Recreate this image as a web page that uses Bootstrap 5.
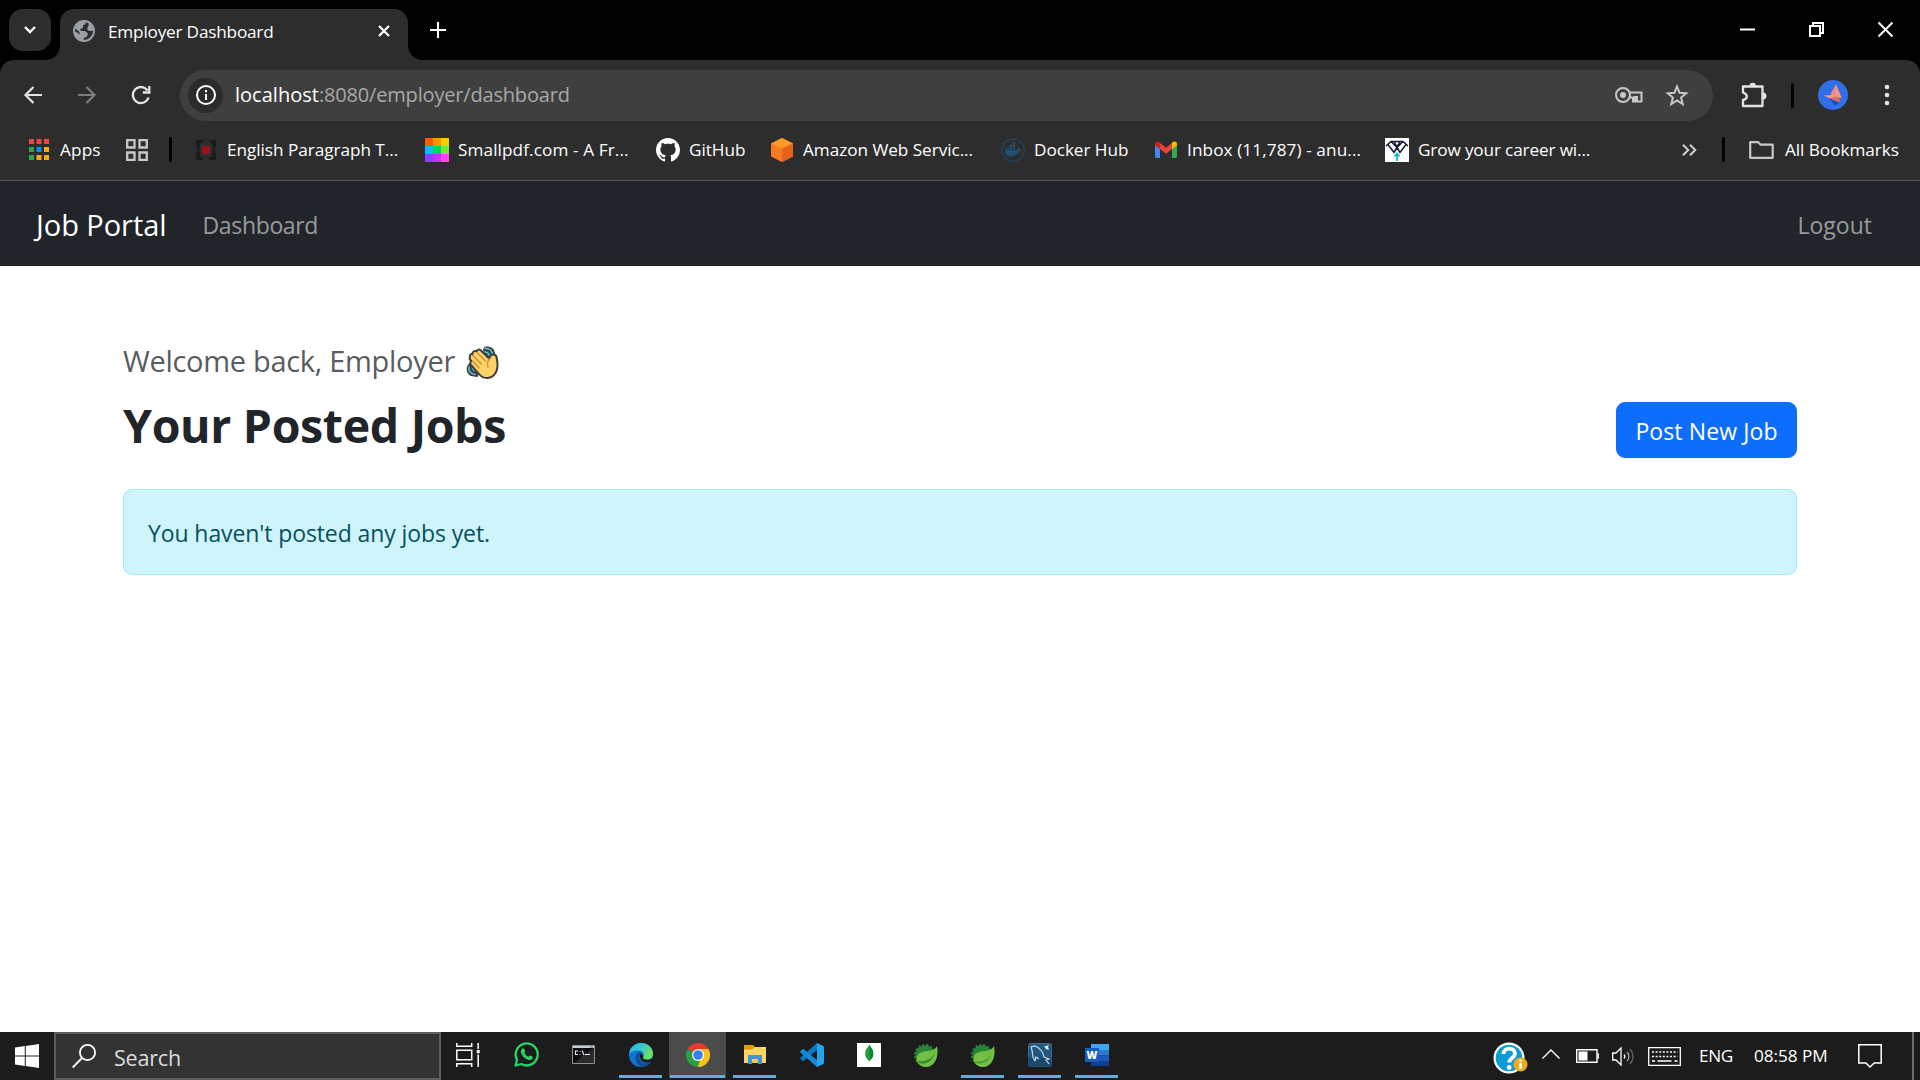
<!DOCTYPE html>
<html lang="en">
<head>
<meta charset="utf-8">
<meta name="viewport" content="width=device-width, initial-scale=1">
<title>Employer Dashboard</title>
<link rel="stylesheet" href="https://cdn.jsdelivr.net/npm/bootstrap@5.3.0/dist/css/bootstrap.min.css">
<style>
html{font-size:24px}
body{font-family:"Open Sans","Noto Sans",sans-serif;font-size:23px;line-height:36px;height:1080px;overflow:hidden;background:#fff}
svg{display:block;flex:none;overflow:visible}
span{white-space:nowrap}
/* browser frame */
.ui-text{font-size:17.2px;line-height:24px;color:#fff;letter-spacing:-.05px;flex:none}
.tab-strip{height:60px;background:#000;padding-left:9px}
.tab-search{width:42px;height:42px;border-radius:14px;background:#2d2d2d;margin-top:9px}
.browser-tab{width:348px;height:51px;margin:9px 0 0 9px;padding:0 18px 8px 13px;background:#2d2d2d;border-radius:14px 14px 0 0;position:relative}
.browser-tab::before,.browser-tab::after{content:"";position:absolute;bottom:0;width:14px;height:14px}
.browser-tab::before{left:-14px;background:radial-gradient(circle at 0 0,#000 13.5px,#2d2d2d 14px)}
.browser-tab::after{right:-14px;background:radial-gradient(circle at 100% 0,#000 13.5px,#2d2d2d 14px)}
.tab-title{letter-spacing:-.2px;margin-left:13px;padding-top:2px}
.tab-add{margin-left:22px}
.window-controls{margin-right:27px;gap:54px;height:58px}
.toolbar-wrap{background:#000}
.toolbar-row{height:70px;background:#2d2d2d;border-radius:14px 14px 0 0;padding:0 23px 0 22px}
.nav-icons{gap:31px;width:158px}
.omnibox{width:1533px;height:51px;border-radius:26px;background:#3f3f3f;padding:0 24px 0 8px;flex:none}
.site-info{width:35px;height:35px;background:#2b2b2b}
.url-text{font-size:20px;line-height:30px;color:#a8a8a8;letter-spacing:-.18px;margin-left:12px}
.url-text b{font-weight:400;color:#fff;letter-spacing:.02px}
.key-icon{margin-right:22px}
.ext-icon{margin:0 24px 0 28px}
.avatar-icon{margin:0 36px 0 24px}
.bar-sep{width:3px;height:25px;border-radius:2px;background:#000;flex:none}
.bookmark-bar{height:51px;background:#2d2d2d;border-bottom:1px solid #565656;padding:0 20px 11px 29px}
.apps-label{margin-left:11px;width:66px;letter-spacing:.15px}
.apps-sep{margin:0 22px 0 21px}
.more-sep{margin:0 24px 0 25px}
.all-label{margin-left:11px}
.bm-item{gap:9px;width:231px;flex:none}
.bm-github{width:114px}
.bm-docker{width:153px}
.bm-grow{width:297px}
.bm-wide .ui-text{letter-spacing:.09px}
.bm-grow .ui-text{letter-spacing:-.15px}
/* page */
.site-nav{height:85px;background:#212529;padding:1px 18px 0}
.site-nav .navbar-brand{font-size:29px;line-height:45px;letter-spacing:-.05px;padding:7px 0}
.site-nav .nav-link{font-size:23px;line-height:36px;padding:13px 12px 11px;color:rgba(255,255,255,.55)}
.site-nav .nav-dash{letter-spacing:-.35px}
.page-container{max-width:1710px;padding-top:72px}
.welcome-line{font-size:29px;line-height:45px;margin-bottom:12px;color:#595c5f;letter-spacing:-.3px;gap:11px}
.wave-icon{margin-top:2px}
.jobs-title{font-size:46.5px;line-height:57.6px;font-weight:700;letter-spacing:-.35px;padding-top:2px;margin-bottom:10px;color:#212529}
.btn-post{font-size:23px;line-height:36px;padding:10px 18px 8px;border-radius:9px;width:181px;height:56px;letter-spacing:.1px;white-space:nowrap}
.empty-alert{border-radius:9px;padding:25px 24px 23px;height:86px;letter-spacing:-.1px;--bs-alert-color:#055160;--bs-alert-bg:#cff4fc;--bs-alert-border-color:#9eeaf9}
/* taskbar */
.task-bar{height:48px;background:#1c1c1c}
.start-btn{width:54px;padding-left:15px}
.task-search{width:387px;height:48px;border:2px solid #5e5e5e;background:#333;padding-left:16px}
.task-search span{font-size:21.5px;line-height:30px;color:#dcdcdc;margin-left:18px;letter-spacing:-.2px;padding-top:3px}
.task-slot{width:57px;height:48px;border-bottom:3px solid transparent;position:relative}
.task-slot.running::after{content:"";position:absolute;left:7px;right:7px;bottom:-1px;height:3px;background:#62acdc}
.task-slot.current{background:#4b4b4b;height:46px;border-bottom-width:1px;align-self:flex-start}
.task-slot.current::after{left:1px;right:1px;bottom:-1px}
.task-view{padding-right:3px}
.help-icon{margin-top:3px}
.caret-icon{margin:0 16px 4px 14px}
.sound-icon{margin:0 14px 0 13px}
.lang-label{margin-left:18px;width:55px;letter-spacing:-.4px}
.clock-label{width:104px}
.note-icon{margin-right:30px}
.desk-edge{width:2px;height:48px;background:#6c6c6c;margin-right:6px}
</style>
</head>
<body class="d-flex flex-column">

<header>
  <div class="tab-strip d-flex align-items-start">
    <div class="tab-search d-flex align-items-center justify-content-center">
      <svg width="12" height="8" viewBox="0 0 12 8" fill="none" stroke="#fff" stroke-width="2.4"><path d="M1 1l5 5 5-5"/></svg>
    </div>
    <div class="browser-tab d-flex align-items-center">
      <svg width="22" height="22" viewBox="0 0 22 22"><circle cx="11" cy="11" r="10" fill="#2d2d2d" stroke="#9aa0a6" stroke-width="2"/><path d="M1 8C2 3 7 .5 11 1l2 1.500-1 2-2 .5v3l-3 1 1 2h4l3 2.500-1 3-3 1.500-1 3.500C5 20.500 1 16 1 11l4 2 1.500 2V12L3 9zM16 3l5 6-2 2h-3l-2-2 1-2z" fill="#9aa0a6"/></svg>
      <span class="ui-text tab-title">Employer Dashboard</span>
      <svg class="ms-auto" width="12" height="12" viewBox="0 0 12 12" stroke="#fff" stroke-width="2.2"><path d="M1 1l10 10M11 1L1 11"/></svg>
    </div>
    <svg width="16" height="16" viewBox="0 0 16 16" stroke="#fff" stroke-width="2.1" class="tab-add align-self-center"><path d="M8 0v16M0 8h16"/></svg>
    <div class="window-controls ms-auto d-flex align-items-center">
      <svg width="15" height="15" viewBox="0 0 15 15"><path d="M0 6.5h15v2H0z" fill="#fff"/></svg>
      <svg width="15" height="15" viewBox="0 0 15 15" fill="none" stroke="#fff" stroke-width="2"><path d="M1 4h10v10H1zM4 4V1h10v10h-3"/></svg>
      <svg width="15" height="15" viewBox="0 0 15 15" stroke="#fff" stroke-width="1.9"><path d="M.5.5l14 14M14.500.5l-14 14"/></svg>
    </div>
  </div>

  <div class="toolbar-wrap">
    <div class="toolbar-row d-flex align-items-center">
      <div class="nav-icons d-flex align-items-center">
        <svg width="23" height="20" viewBox="0 0 23 20" fill="none" stroke="#e3e3e3" stroke-width="2.2"><path d="M20 10H4M11.500 2l-8 8 8 8"/></svg>
        <svg width="23" height="20" viewBox="0 0 23 20" fill="none" stroke="#7d7d7d" stroke-width="2.200"><path d="M2 10h16M10.500 2l8 8-8 8"/></svg>
        <svg width="22" height="20" viewBox="0 0 22 20" fill="none" stroke="#e3e3e3" stroke-width="2.3"><path d="M18.500 12.500A8 8 0 1 1 17.500 5.500M19.300 1v6.500h-6.500"/></svg>
      </div>
      <div class="omnibox d-flex align-items-center">
        <div class="site-info rounded-circle d-flex align-items-center justify-content-center">
          <svg width="20" height="20" viewBox="0 0 20 20"><circle cx="10" cy="10" r="9" fill="none" stroke="#fff" stroke-width="2"/><path d="M9 9h2v6H9zM9 5h2v2.200H9z" fill="#fff"/></svg>
        </div>
        <span class="url-text"><b>localhost</b>:8080/employer/dashboard</span>
        <svg class="key-icon ms-auto" width="28" height="16" viewBox="0 0 28 16" fill="none" stroke="#c7c7c7" stroke-width="2"><path d="M14 5.500h12.500v9H22V10h-2v4.500M14 10.500h4v4h3.500"/><circle cx="8" cy="8" r="7"/><circle cx="8" cy="8" r="3" fill="#c7c7c7" stroke="none"/></svg>
        <svg width="24" height="23" viewBox="0 0 24 23" fill="none" stroke="#c7c7c7" stroke-width="2"><path d="M12 2.500l2.500 6.200 6.700.5-5.100 4.300 1.600 6.500L12 16.500l-5.700 3.500 1.600-6.500-5.100-4.300 6.700-.5z"/></svg>
      </div>
      <svg class="ext-icon" width="26" height="26" viewBox="0 0 26 26"><path d="M2 4.500h19.500v19.500H2v-6c5-1 5-6 0-7.500z" fill="none" stroke="#e3e3e3" stroke-width="2.300" stroke-linejoin="round"/><path d="M8.500 4a3.200 3.200 0 0 1 6.400 0zM22 10.500a3.500 3.500 0 0 1 0 7z" fill="#e3e3e3"/></svg>
      <div class="bar-sep"></div>
      <svg class="avatar-icon" width="30" height="30" viewBox="0 0 30 30"><circle cx="15" cy="15" r="15" fill="#2f6fea"/><path d="M12 19l5 7 6-6z" fill="#1c4fb5"/><path d="M18 4.500L12.500 14l5 4 6-.5z" fill="#f28b82"/><path d="M5.500 15.500l10-.5 5.500 7z" fill="#fa9a90"/><path d="M18 4.500l-.5 13 6 .5z" fill="#ff8f85"/><path d="M12 18l8 4 3-1-5-5z" fill="#e8675f"/></svg>
      <svg width="6" height="22" viewBox="0 0 6 22" fill="#e3e3e3"><circle cx="3" cy="3" r="2.300"/><circle cx="3" cy="11" r="2.300"/><circle cx="3" cy="19" r="2.300"/></svg>
    </div>
  </div>

  <div class="bookmark-bar d-flex align-items-center">
    <svg width="20" height="21" viewBox="0 0 20 21"><path d="M0 0h5v5H0zM7.500 0h5v5h-5zM15 0h5v5h-5z" fill="#f4433c"/><path d="M0 8h5v5H0zM0 16h5v5H0z" fill="#30a452"/><path d="M7.500 8h5v5h-5z" fill="#1a83f5"/><path d="M15 8h5v5h-5zM15 16h5v5h-5zM7.500 16h5v5h-5z" fill="#fba60d"/></svg>
    <span class="ui-text apps-label">Apps</span>
    <svg width="22" height="22" viewBox="0 0 22 22" fill="none" stroke="#c7c7c7" stroke-width="2.300"><path d="M1.200 1.200h7.300v7.300H1.200zM13.500 1.200h7.300v7.300h-7.300zM1.200 13.500h7.300v7.300H1.200zM13.500 13.500h7.300v7.300h-7.300z"/></svg>
    <div class="bar-sep apps-sep"></div>

    <div class="bm-item d-flex align-items-center">
      <svg width="24" height="24" viewBox="0 0 24 24"><path d="M2 2h7v3H6v5l-2 2 2 2v5h3v3H2v-7h1v-6H2zM22 2h-7v3h3v5l2 2-2 2v5h-3v3h7v-7h-1v-6h1z" fill="#1d1a1b"/><path d="M8 8h8v8H8z" fill="#97121d"/></svg>
      <span class="ui-text">English Paragraph T...</span>
    </div>
    <div class="bm-item bm-wide d-flex align-items-center">
      <svg width="24" height="24" viewBox="0 0 24 24" shape-rendering="crispEdges"><path d="M0 0h8v8H0z" fill="#ff5a00"/><path d="M8 0h8v8H8z" fill="#ff9500"/><path d="M16 0h8v8h-8z" fill="#ffd000"/><path d="M0 8h8v8H0z" fill="#00bfff"/><path d="M8 8h8v8H8z" fill="#00d563"/><path d="M16 8h8v8h-8z" fill="#7fe34b"/><path d="M0 16h8v8H0z" fill="#8a3ffc"/><path d="M8 16h8v8H8z" fill="#c235f5"/><path d="M16 16h8v8h-8z" fill="#ff43f5"/></svg>
      <span class="ui-text">Smallpdf.com - A Fr...</span>
    </div>
    <div class="bm-item bm-github d-flex align-items-center">
      <svg width="24" height="24" viewBox="0 0 16 16" fill="#fff"><path d="M8 0C3.580 0 0 3.580 0 8c0 3.540 2.290 6.530 5.470 7.590.4.070.55-.17.55-.38 0-.19-.01-.82-.01-1.490-2.010.37-2.530-.49-2.690-.94-.09-.23-.48-.94-.82-1.130-.28-.15-.68-.52-.01-.53.63-.01 1.080.58 1.230.82.72 1.210 1.870.87 2.330.66.070-.52.28-.87.51-1.070-1.780-.2-3.640-.89-3.640-3.950 0-.87.31-1.590.82-2.150-.08-.2-.36-1.020.08-2.120 0 0 .67-.21 2.200.82.64-.18 1.320-.27 2-.27s1.360.09 2 .27c1.530-1.040 2.200-.82 2.200-.82.44 1.100.16 1.920.08 2.120.51.56.82 1.270.82 2.150 0 3.070-1.870 3.750-3.650 3.950.29.25.54.73.54 1.480 0 1.070-.01 1.930-.01 2.200 0 .21.15.46.55.38A8.010 8.010 0 0 0 16 8c0-4.420-3.580-8-8-8z"/></svg>
      <span class="ui-text">GitHub</span>
    </div>
    <div class="bm-item d-flex align-items-center">
      <svg width="24" height="24" viewBox="0 0 24 24"><path d="M12 0l11 5.500v13L12 24 1 18.500v-13z" fill="#f47b20"/><path d="M12 0l11 5.500-11 5-11-5z" fill="#fd9a26"/><path d="M23 5.500v13L12 24V10.500z" fill="#e8611a"/></svg>
      <span class="ui-text">Amazon Web Servic...</span>
    </div>
    <div class="bm-item bm-docker d-flex align-items-center">
      <svg width="24" height="24" viewBox="0 0 24 24"><circle cx="12" cy="12" r="11.200" fill="none" stroke="#24425a" stroke-width="1.300"/><path d="M4 12h12c1 0 1-2 .5-3 1.500.5 2 1.500 2 2.200h2c-.4 1.500-1.500 2-3 2-1.500 4-4 5.300-7.500 5.300-4 0-6-2.500-6-6.500zM5.500 9.500H8v2H5.500zM8.500 9.500H11v2H8.500zM11.500 9.500H14v2h-2.500zM8.500 7H11v2H8.500zM11.500 7H14v2h-2.500zM11.500 4.500H14v2h-2.500z" fill="#20506f"/></svg>
      <span class="ui-text">Docker Hub</span>
    </div>
    <div class="bm-item bm-wide d-flex align-items-center">
      <svg width="24" height="24" viewBox="0 0 24 24"><path d="M1 7l5 3.500V20H2.500A1.500 1.500 0 0 1 1 18.500z" fill="#4285f4"/><path d="M23 7l-5 3.500V20h3.500a1.500 1.500 0 0 0 1.500-1.500z" fill="#34a853"/><path d="M6 5l6 4.700L18 5v6l-6 4.800L6 11z" fill="#ea4335"/><path d="M1 6c0-2.500 2.500-3 4-2l1 .8V11L1 7.500z" fill="#c5221f"/><path d="M23 6c0-2.500-2.500-3-4-2l-1 .8V11l5-3.500z" fill="#fbbc04"/></svg>
      <span class="ui-text">Inbox (11,787) - anu...</span>
    </div>
    <div class="bm-item bm-grow d-flex align-items-center">
      <svg width="24" height="24" viewBox="0 0 24 24"><path d="M0 0h24v24H0z" fill="#fff"/><path d="M1 8l5-4.500h12L23 8M3 6.500l6 8 3-5 3 5 6-8M6 3.500l6 6 6-6M9 3.500l6 11M15 3.500l-6 11" fill="none" stroke="#15172e" stroke-width="1.500"/><path d="M12 23v-7M9.500 18.500L12 15.500l2.500 3" fill="none" stroke="#18b9d0" stroke-width="1.800"/></svg>
      <span class="ui-text">Grow your career wi...</span>
    </div>
    <svg width="15" height="12" viewBox="0 0 15 12" fill="none" stroke="#d0d0d0" stroke-width="2"><path d="M1 .7L6.300 6 1 11.300M8 .7L13.300 6 8 11.300"/></svg>
    <div class="bar-sep more-sep"></div>
    <svg width="25" height="18" viewBox="0 0 25 18" fill="none" stroke="#c7c7c7" stroke-width="2.200" stroke-linejoin="round"><path d="M1.200 16.800V1.200h8l2.500 2.500h12v13.100z"/></svg>
    <span class="ui-text all-label">All Bookmarks</span>
  </div>
</header>

<nav class="navbar navbar-expand navbar-dark site-nav">
  <div class="container-fluid">
    <a class="navbar-brand" href="#">Job Portal</a>
    <ul class="navbar-nav me-auto"><li class="nav-item"><a class="nav-link nav-dash" href="#">Dashboard</a></li></ul>
    <ul class="navbar-nav"><li class="nav-item"><a class="nav-link" href="#">Logout</a></li></ul>
  </div>
</nav>

<main class="flex-grow-1">
  <div class="container page-container">
    <p class="welcome-line d-flex align-items-center">
      <span>Welcome back, Employer</span>
      <svg class="wave-icon" width="33" height="34" viewBox="0 0 33 34" stroke-linecap="round" stroke-linejoin="round">
        <path d="M18 5c1-4 7-3 9 0l2 6-8 2zM5 18c-5 4-4 9 0 12l6 1 2-6z" fill="#3f3f3f" stroke="#3f3f3f" stroke-width="2"/>
        <path d="M19 3.500c4-.5 7 2 7.500 6M19 7c2 0 3.500 1 4 3M3 22c-1 4 2 7 6 7.500M6.500 22c0 2 1.500 3.500 3.500 4" fill="none" stroke="#50c3e0" stroke-width="1.700"/>
        <path d="M4 12c-1-2 1-3.500 2.500-2.500-.5-2.500 2-4.500 4-3 .5-2 3-2.500 4.500-1l8 8 1-1.500c.5-3.500 6-3 6.500 0l1 6c.5 8-3 14.500-10 15-4 .3-7-2-9-4.500l-7.500-8.500c-1.500-1.500-.5-3.500.5-4-1.500-.8-2.500-2-1.500-4z" fill="#ffd166" stroke="#3f3f3f" stroke-width="2"/>
        <path d="M7.500 11l8 8M11.500 8l8 8M7 16.500l6 6.500M24 13.500c-2.500 2.500-3.500 5-2 8.500" fill="none" stroke="#c8923c" stroke-width="1.400"/>
      </svg>
    </p>
    <div class="d-flex justify-content-between align-items-center">
      <h2 class="jobs-title">Your Posted Jobs</h2>
      <a class="btn btn-primary btn-post" href="#">Post New Job</a>
    </div>
    <div class="alert alert-info empty-alert mt-3 mb-0">You haven't posted any jobs yet.</div>
  </div>
</main>

<footer class="task-bar d-flex align-items-center">
  <div class="start-btn">
    <svg width="24" height="24" viewBox="0 0 24 24" fill="#fff"><path d="M0 3.400L9.800 2v9.500H0zM10.800 1.900L24 0v11.500H10.800zM0 12.500h9.800V22L0 20.600zM10.800 12.500H24V24l-13.200-1.900z"/></svg>
  </div>
  <div class="task-search d-flex align-items-center">
    <svg width="24" height="24" viewBox="0 0 24 24" fill="none" stroke="#fff" stroke-width="1.800"><circle cx="15.500" cy="8.500" r="7.600"/><path d="M10 14L.7 23.500"/></svg>
    <span>Search</span>
  </div>
  <div class="task-slot task-view d-flex align-items-center justify-content-center">
    <svg width="24" height="24" viewBox="0 0 24 24" fill="none" stroke="#fff" stroke-width="1.500"><path d="M.8 0v3.300h14.900V0M.8 7.200h14.900v9.600H.8zM.8 24v-3.300h14.900V24M22.200 0v6M22.200 11.500V24"/><path d="M20.700 7h3v3.200h-3z" fill="#fff" stroke="none"/></svg>
  </div>
  <div class="task-slot d-flex align-items-center justify-content-center">
    <svg width="25" height="25" viewBox="0 0 25 25"><path d="M1.500 23.500l1.600-5.700A11 11 0 1 1 7.300 22z" fill="none" stroke="#25d366" stroke-width="2.300" stroke-linejoin="round"/><path d="M8.500 6.500c.7-.5 1.500-.2 1.800.4l.9 2.100c.2.600-.8 1.500-.8 1.900.8 1.700 2.200 3 4 3.800.5 0 1.200-1.400 1.800-1.200l2.200 1.100c.6.4.4 1.500-.1 2.200-1 1.200-2.700 1.500-4.400.9-3.300-1.200-5.900-3.700-6.900-6.600-.6-1.800.1-3.700 1.500-4.600z" fill="#25d366"/></svg>
  </div>
  <div class="task-slot d-flex align-items-center justify-content-center">
    <svg width="23" height="19" viewBox="0 0 23 19"><path d="M.5.5h22v18H.5z" fill="#0b0b0b" stroke="#8d9299"/><path d="M12 9L22 3v15H3z" fill="#2a2a2a"/><path d="M1 1h21v2H1z" fill="#c9ced6"/><path d="M18 1.500h3v1h-3z" fill="#4a6ea8"/><path d="M6 6H3.500v3.500H6M8 6v.800M8 9v.800M10 5.500l2 4.500M13 9.500h5" fill="none" stroke="#eee" stroke-width="1.100"/></svg>
  </div>
  <div class="task-slot running d-flex align-items-center justify-content-center">
    <svg width="24" height="24" viewBox="0 0 24 24"><defs><linearGradient id="edgeTop" x1="0" x2="1" y1="0" y2=".5"><stop offset="0" stop-color="#2bb1e8"/><stop offset=".5" stop-color="#36c6d8"/><stop offset="1" stop-color="#6de358"/></linearGradient></defs><circle cx="12" cy="12" r="12" fill="#0d76cf"/><path d="M0 11C1 4 6 0 12 0c7 0 12 5 12 10.500 0 4-3 6-6 6-3 0-4.500-1-3.800-2.300C16 11 14 7.500 9.500 7.500 5 7.500 1 9 0 11z" fill="url(#edgeTop)"/><path d="M9 9c-4 4-3 12 4 15 4-.3 7-2.200 9-5.500-6 3-12 0-12-5 0-2 .5-3.500 2-4.500z" fill="#134f96"/><path d="M11 10.500c-1.500 5 2 9.500 8 9 2-.2 3-.9 4-1.500 1.500-1.500 1-3 .2-2.500-3 2-8 1.500-9.500-.5 1.300-1.500.3-4.500-2.700-4.500z" fill="#1c1c1c"/></svg>
  </div>
  <div class="task-slot running current d-flex align-items-center justify-content-center">
    <svg width="24" height="24" viewBox="0 0 24 24"><path d="M12 12L1.600 6A12 12 0 0 1 22.400 6z" fill="#e33b2e"/><path d="M12 12L12 6h10.400A12 12 0 0 1 12 24z" fill="#fcc21b"/><path d="M12 12l2 5-2 7A12 12 0 0 1 1.600 6z" fill="#2a9d47"/><circle cx="12" cy="12" r="6" fill="#fff"/><circle cx="12" cy="12" r="4.800" fill="#3380ee"/></svg>
  </div>
  <div class="task-slot running d-flex align-items-center justify-content-center">
    <svg width="22" height="19" viewBox="0 0 22 19"><path d="M0 0h9l2 2-1 3H0z" fill="#e19a08"/><path d="M0 4.500h8L11 2h11v16H0z" fill="#ffd467"/><path d="M4 10h14v9h-4v-5H8v5H4z" fill="#3d94dc"/><path d="M8 14.500h6V18H8z" fill="#f5c44e"/></svg>
  </div>
  <div class="task-slot d-flex align-items-center justify-content-center">
    <svg width="24" height="24" viewBox="0 0 24 24"><path d="M17 0v7L3 18.200l-2.500-2.300c-.4-.4-.4-.9 0-1.300z" fill="#0a78c2"/><path d="M17 24v-7L3 5.800.5 8.100c-.4.400-.4.900 0 1.300z" fill="#1688d4"/><path d="M17 0l6.300 3c.5.200.7.600.7 1v16c0 .4-.2.800-.7 1L17 24z" fill="#25a3ee"/></svg>
  </div>
  <div class="task-slot d-flex align-items-center justify-content-center">
    <svg width="24" height="24" viewBox="0 0 24 24"><path d="M0 0h24v24H0z" fill="#fff"/><path d="M12.300 1.500c1 2.500 4 4.500 4 9 0 4-2 5.500-3.500 7l-.5 2-.5-2c-2-1.500-4-4-3.500-8 .4-4 3.200-5.500 4-8z" fill="#23a03f"/><path d="M12.300 1.500c1 2.500 4 4.500 4 9 0 4-2 5.500-3.500 7z" fill="#158335"/></svg>
  </div>
  <div class="task-slot d-flex align-items-center justify-content-center">
    <svg width="24" height="24" viewBox="0 0 24 24"><circle cx="11" cy="12" r="9.500" fill="#278537" stroke="#278537" stroke-width="3" stroke-dasharray="2.200 1.600"/><path d="M23 3c2 9-1 20-10 21C8 24.500 2.500 21 2.500 16c0-6 6-7.500 11-8 5-.5 7.500-1.500 9.500-5z" fill="#72bf44"/><path d="M4 18c6 1.500 13-1 17-8-2.500 8-9 12-15.500 10z" fill="#278537"/></svg>
  </div>
  <div class="task-slot running d-flex align-items-center justify-content-center">
    <svg width="24" height="24" viewBox="0 0 24 24"><circle cx="11" cy="12" r="9.500" fill="#278537" stroke="#278537" stroke-width="3" stroke-dasharray="2.200 1.600"/><path d="M23 3c2 9-1 20-10 21C8 24.500 2.500 21 2.500 16c0-6 6-7.500 11-8 5-.5 7.500-1.500 9.500-5z" fill="#72bf44"/><path d="M4 18c6 1.500 13-1 17-8-2.500 8-9 12-15.500 10z" fill="#4e9f3c"/></svg>
  </div>
  <div class="task-slot running d-flex align-items-center justify-content-center">
    <svg width="24" height="24" viewBox="0 0 24 24"><rect x=".5" y=".5" width="23" height="23" rx="2" fill="#20587f" stroke="#3b6d91"/><path d="M0 14h24v8a2 2 0 0 1-2 2H2a2 2 0 0 1-2-2z" fill="#173f5f" fill-opacity=".6"/><path d="M7 18L5 14l-1-7-1-3 4-1c5 2 8 6 9 11l5 2-3 1 3 4M7 18l1-4 3 2" fill="none" stroke="#c5d8e6" stroke-width="1.200"/><path d="M16 3l2 3 3 1-1-3 1-2-3 1z" fill="#e3edf5"/></svg>
  </div>
  <div class="task-slot running d-flex align-items-center justify-content-center">
    <svg width="24" height="24" viewBox="0 0 24 24"><path d="M6 1h18v6H6z" fill="#41a5ee"/><path d="M6 7h18v5.500H6z" fill="#2b7cd3"/><path d="M6 12.500h18V18H6z" fill="#185abd"/><path d="M6 18h18v5H6z" fill="#103f91"/><path d="M0 5h14v14H0z" fill="#1b5dbe"/><text x="7" y="16" text-anchor="middle" font-family="Open Sans" font-weight="800" font-size="10.500" fill="#fff">W</text></svg>
  </div>

  <div class="ms-auto d-flex align-items-center">
    <svg class="help-icon" width="35" height="32" viewBox="0 0 35 32"><circle cx="16" cy="16" r="15.500" fill="#fff"/><circle cx="16" cy="16" r="13.300" fill="#0f9bd7"/><path d="M10.500 12c0-7 11.500-7 11.500-.5 0 4.500-5.800 4.500-5.800 9" fill="none" stroke="#fff" stroke-width="3.800"/><circle cx="16.200" cy="25.500" r="2.400" fill="#fff"/><circle cx="27.500" cy="22.500" r="7" fill="#f0ab1c"/><path d="M26.300 21h2.600v6h-2.600zM26.300 17.500h2.600v2.300h-2.600z" fill="#fff"/></svg>
    <svg class="caret-icon" width="18" height="10" viewBox="0 0 18 10" fill="none" stroke="#fff" stroke-width="1.400"><path d="M.5 9.500L9 1l8.500 8.500"/></svg>
    <svg width="23" height="14" viewBox="0 0 23 14"><path d="M.7.700h20.300v12.600H.7z" fill="none" stroke="#fff" stroke-width="1.400"/><path d="M2.500 2.500h9v9h-9zM21.500 4.500H23v5h-1.500z" fill="#fff"/></svg>
    <svg class="sound-icon" width="22" height="19" viewBox="0 0 22 19" fill="none" stroke="#fff" stroke-width="1.300"><path d="M.7 6v7H4l5 5V1L4 6zM12 7.500c1 1.200 1 2.800 0 4"/><path d="M15 5c2.500 2.500 2.500 6.500 0 9" stroke="#aaa"/><path d="M18 2c4 4.500 4 10.500 0 15" stroke="#666"/></svg>
    <svg width="33" height="19" viewBox="0 0 33 19" fill="none" stroke="#fff" stroke-width="1.300"><path d="M.7.700h31.600v17.600H.7z"/><path d="M4 5h25.500M4 9.500h25.500" stroke-dasharray="2 1.600" stroke-width="1.500"/><path d="M4 14h3M9.500 14h14M26.500 14h3" stroke-width="1.500"/></svg>
    <span class="ui-text lang-label">ENG</span>
    <span class="ui-text clock-label">08:58 PM</span>
    <svg class="note-icon" width="24" height="24" viewBox="0 0 24 24" fill="none" stroke="#fff" stroke-width="1.500"><path d="M.8.800h22.400v18.200h-7L12 23l-4.200-4h-7z"/></svg>
    <div class="desk-edge"></div>
  </div>
</footer>
<script src="https://cdn.jsdelivr.net/npm/bootstrap@5.3.0/dist/js/bootstrap.bundle.min.js"></script>
</body>
</html>
